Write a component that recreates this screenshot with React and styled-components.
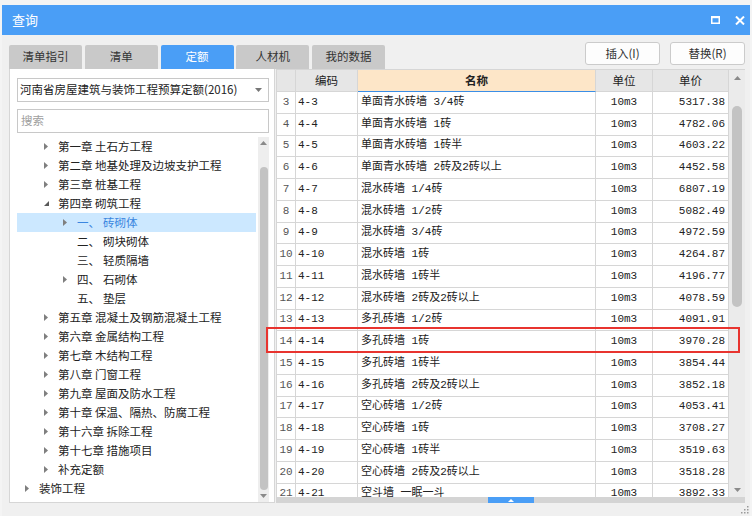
import React from 'react';
import styled, { createGlobalStyle } from 'styled-components';

const GlobalStyle = createGlobalStyle`
  html, body { margin: 0; padding: 0; background: #f4f4f4; }
  body { font-family: "Noto Sans CJK SC", "Noto Sans", sans-serif; }
  * { box-sizing: border-box; }
`;

const UI_FONT = `"Noto Sans CJK SC", "Noto Sans", sans-serif`;
const GRID_FONT = `"Liberation Mono", "Noto Sans CJK SC", monospace`;
const BLUE = '#4a9ef6';
const LINE = '#d6d6d6';

const Window = styled.div`
  margin: 5px 2px 0 2px;
  width: 748px;
  height: 511px;
  display: flex;
  flex-direction: column;
  background: #f0f0f0;
`;

const TitleBar = styled.div`
  height: 30px;
  flex-shrink: 0;
  background: ${BLUE};
  display: flex;
  align-items: center;
  padding: 0 5px 0 10px;
  color: #fff;
`;

const Title = styled.div`
  flex: 1;
  font-size: 13px;
  line-height: 30px;
`;

const TitleButtons = styled.div`
  display: flex;
  align-items: center;
  gap: 15px;
`;

const Body = styled.div`
  display: flex;
  flex-direction: column;
  padding: 7px 5px 0 7px;
`;

const Toolbar = styled.div`
  display: flex;
  height: 27px;
`;

const Tabs = styled.div`
  display: flex;
  gap: 2.75px;
  align-self: flex-end;
`;

const Tab = styled.div`
  width: 73px;
  height: 24px;
  display: flex;
  align-items: center;
  justify-content: center;
  border-radius: 2px 2px 0 0;
  background: ${p => (p.$active ? BLUE : '#c9c9c9')};
  color: ${p => (p.$active ? '#fff' : '#333')};
  font-size: 11.5px;
  line-height: 1;
`;

const Spacer = styled.div`
  flex: 1;
`;

const Actions = styled.div`
  display: flex;
  gap: 10px;
  align-self: flex-start;
`;

const ActionButton = styled.button`
  width: 75px;
  height: 23px;
  padding: 0;
  background: #fdfdfd;
  border: 1px solid #cbcbcb;
  border-radius: 3px;
  color: #333;
  font-family: ${UI_FONT};
  font-size: 11.5px;
  line-height: 1;
`;

const Content = styled.div`
  position: relative;
  display: flex;
  gap: 1px;
  height: 434px;
`;

const LeftPanel = styled.div`
  width: 266px;
  flex-shrink: 0;
  display: flex;
  flex-direction: column;
  background: #fff;
  border: 1px solid ${LINE};
  border-top: none;
  padding: 9px 5px 0 7px;
`;

const SelectBox = styled.div`
  height: 24px;
  display: flex;
  align-items: center;
  padding: 0 6px 0 2px;
  border: 1px solid #c8c8c8;
  font-size: 11.5px;
  color: #222;
  line-height: 1;
`;

const SelectText = styled.span`
  flex: 1;
  white-space: nowrap;
`;

const SearchBox = styled.div`
  height: 24px;
  margin-top: 7px;
  display: flex;
  align-items: center;
  padding: 0 3px;
  border: 1px solid #c8c8c8;
  font-size: 11.5px;
  color: #a0a0a0;
  line-height: 1;
`;

const TreeArea = styled.div`
  flex: 1;
  min-height: 0;
  margin-top: 4px;
  display: flex;
  gap: 2px;
`;

const TreeList = styled.div`
  flex: 1;
  overflow: hidden;
`;

const TreeRow = styled.div`
  height: 19px;
  display: flex;
  align-items: center;
  padding-left: ${p => 8 + p.$level * 19}px;
  background: ${p => (p.$selected ? '#cce8ff' : 'transparent')};
  color: ${p => (p.$selected ? '#3a86e0' : '#222')};
  font-size: 11.5px;
  line-height: 1;
  white-space: nowrap;
`;

const Toggle = styled.span`
  width: 14px;
  flex-shrink: 0;
  display: flex;
  align-items: center;
`;

const SectionNo = styled.span`
  display: inline-block;
  width: 26px;
`;

const VScroll = styled.div`
  width: ${p => p.$w}px;
  flex-shrink: 0;
  display: flex;
  flex-direction: column;
  align-items: center;
  background: ${p => p.$bg};
`;

const ScrollArrow = styled.div`
  height: ${p => p.$h}px;
  flex-shrink: 0;
  display: flex;
  align-items: center;
  justify-content: center;
`;

const ScrollTrack = styled.div`
  flex: 1;
  width: 100%;
  display: flex;
  flex-direction: column;
  align-items: center;
`;

const Thumb = styled.div`
  width: ${p => p.$w}px;
  height: ${p => p.$h}px;
  margin-top: ${p => p.$top}px;
  border-radius: ${p => p.$w / 2}px;
  background: #c3c3c3;
`;

const TablePanel = styled.div`
  flex: 1;
  display: flex;
  flex-direction: column;
  border-top: 1px solid ${LINE};
`;

const TableMain = styled.div`
  flex: 1;
  min-height: 0;
  display: flex;
`;

const Grid = styled.div`
  width: 453px;
  flex-shrink: 0;
  display: flex;
  flex-direction: column;
  overflow: hidden;
  background: #fff;
`;

const COLS = '20px 62px 238px 57px 76px';

const HeaderRow = styled.div`
  display: grid;
  grid-template-columns: ${COLS};
  height: 22px;
  flex-shrink: 0;
`;

const HeaderCell = styled.div`
  display: flex;
  align-items: center;
  justify-content: center;
  background: ${p => (p.$accent ? '#fde6c8' : '#e6e6e6')};
  border-right: 1px solid ${LINE};
  border-left: ${p => (p.$first ? `1px solid ${LINE}` : 'none')};
  border-bottom: 1px solid ${p => (p.$accent ? '#3b8ee6' : LINE)};
  font-family: ${UI_FONT};
  font-size: 11.5px;
  font-weight: ${p => (p.$accent ? 700 : 400)};
  color: #222;
  line-height: 1;
`;

const DataRow = styled.div`
  display: grid;
  grid-template-columns: ${COLS};
  height: 21.76px;
  flex-shrink: 0;
`;

const Cell = styled.div`
  display: flex;
  align-items: center;
  justify-content: ${p =>
    p.$align === 'right' ? 'flex-end' : p.$align === 'center' ? 'center' : 'flex-start'};
  padding: ${p =>
    p.$align === 'right' ? '0 3px 0 0' : p.$align === 'center' ? '0' : `0 0 0 ${p.$pad || 2}px`};
  border-right: 1px solid ${LINE};
  border-left: ${p => (p.$first ? `1px solid ${LINE}` : 'none')};
  border-bottom: 1px solid ${LINE};
  font-family: ${GRID_FONT};
  font-size: 11px;
  color: ${p => (p.$muted ? '#555' : '#222')};
  line-height: 1;
  white-space: nowrap;
  overflow: hidden;
`;

const HScroll = styled.div`
  height: 6px;
  flex-shrink: 0;
  display: flex;
  justify-content: center;
  background: #d4d4d4;
`;

const HHandle = styled.div`
  width: 46px;
  height: 100%;
  display: flex;
  align-items: center;
  justify-content: center;
  background: ${BLUE};
`;

const Highlight = styled.div`
  position: absolute;
  left: 257px;
  top: 258px;
  width: 474px;
  height: 26px;
  border: 2px solid #e8342f;
  pointer-events: none;
`;

const Footer = styled.div`
  height: 13px;
  flex-shrink: 0;
  display: flex;
  justify-content: flex-end;
  align-items: flex-end;
  padding: 0 1px 2px 0;
`;

const Collapsed = () => (
  <svg width="4" height="7" viewBox="0 0 4 7">
    <path d="M0 0 L4 3.5 L0 7 Z" fill="#7f7f7f" />
  </svg>
);

const Expanded = () => (
  <svg width="5" height="5" viewBox="0 0 5 5">
    <path d="M5 0 L5 5 L0 5 Z" fill="#595959" />
  </svg>
);

const Up = ({ c = '#8a8a8a' }) => (
  <svg width="7" height="4" viewBox="0 0 7 4">
    <path d="M0 4 L3.5 0 L7 4 Z" fill={c} />
  </svg>
);

const Down = ({ c = '#8a8a8a' }) => (
  <svg width="7" height="4" viewBox="0 0 7 4">
    <path d="M0 0 L7 0 L3.5 4 Z" fill={c} />
  </svg>
);

const tree = [
  { l: 1, t: '第一章 土石方工程', a: 'c' },
  { l: 1, t: '第二章 地基处理及边坡支护工程', a: 'c' },
  { l: 1, t: '第三章 桩基工程', a: 'c' },
  { l: 1, t: '第四章 砌筑工程', a: 'e' },
  { l: 2, n: '一、', t: '砖砌体', a: 'c', s: true },
  { l: 2, n: '二、', t: '砌块砌体' },
  { l: 2, n: '三、', t: '轻质隔墙' },
  { l: 2, n: '四、', t: '石砌体', a: 'c' },
  { l: 2, n: '五、', t: '垫层' },
  { l: 1, t: '第五章 混凝土及钢筋混凝土工程', a: 'c' },
  { l: 1, t: '第六章 金属结构工程', a: 'c' },
  { l: 1, t: '第七章 木结构工程', a: 'c' },
  { l: 1, t: '第八章 门窗工程', a: 'c' },
  { l: 1, t: '第九章 屋面及防水工程', a: 'c' },
  { l: 1, t: '第十章 保温、隔热、防腐工程', a: 'c' },
  { l: 1, t: '第十六章 拆除工程', a: 'c' },
  { l: 1, t: '第十七章 措施项目', a: 'c' },
  { l: 1, t: '补充定额', a: 'c' },
  { l: 0, t: '装饰工程', a: 'c' },
];

const rows = [
  [3, '4-3', '单面青水砖墙 3/4砖', '5317.38'],
  [4, '4-4', '单面青水砖墙 1砖', '4782.06'],
  [5, '4-5', '单面青水砖墙 1砖半', '4603.22'],
  [6, '4-6', '单面青水砖墙 2砖及2砖以上', '4452.58'],
  [7, '4-7', '混水砖墙 1/4砖', '6807.19'],
  [8, '4-8', '混水砖墙 1/2砖', '5082.49'],
  [9, '4-9', '混水砖墙 3/4砖', '4972.59'],
  [10, '4-10', '混水砖墙 1砖', '4264.87'],
  [11, '4-11', '混水砖墙 1砖半', '4196.77'],
  [12, '4-12', '混水砖墙 2砖及2砖以上', '4078.59'],
  [13, '4-13', '多孔砖墙 1/2砖', '4091.91'],
  [14, '4-14', '多孔砖墙 1砖', '3970.28'],
  [15, '4-15', '多孔砖墙 1砖半', '3854.44'],
  [16, '4-16', '多孔砖墙 2砖及2砖以上', '3852.18'],
  [17, '4-17', '空心砖墙 1/2砖', '4053.41'],
  [18, '4-18', '空心砖墙 1砖', '3708.27'],
  [19, '4-19', '空心砖墙 1砖半', '3519.63'],
  [20, '4-20', '空心砖墙 2砖及2砖以上', '3518.28'],
  [21, '4-21', '空斗墙 一眠一斗', '3892.33'],
];

const tabs = ['清单指引', '清单', '定额', '人材机', '我的数据'];

export default function App() {
  return (
    <>
      <GlobalStyle />
      <Window>
        <TitleBar>
          <Title>查询</Title>
          <TitleButtons>
            <svg width="9" height="8" viewBox="0 0 9 8">
              <rect x="0.75" y="1" width="7.5" height="6.25" fill="none" stroke="#fff" strokeWidth="1.5" />
              <rect x="0" y="0" width="9" height="2.2" fill="#fff" />
            </svg>
            <svg width="10" height="9" viewBox="0 0 10 9">
              <path d="M1 0.5 L9 8.5 M9 0.5 L1 8.5" stroke="#fff" strokeWidth="2" />
            </svg>
          </TitleButtons>
        </TitleBar>
        <Body>
          <Toolbar>
            <Tabs>
              {tabs.map(t => (
                <Tab key={t} $active={t === '定额'}>{t}</Tab>
              ))}
            </Tabs>
            <Spacer />
            <Actions>
              <ActionButton>插入(I)</ActionButton>
              <ActionButton>替换(R)</ActionButton>
            </Actions>
          </Toolbar>
          <Content>
            <LeftPanel>
              <SelectBox>
                <SelectText>河南省房屋建筑与装饰工程预算定额(2016)</SelectText>
                <Down c="#777" />
              </SelectBox>
              <SearchBox>搜索</SearchBox>
              <TreeArea>
                <TreeList>
                  {tree.map((n, i) => (
                    <TreeRow key={i} $level={n.l} $selected={n.s}>
                      <Toggle>{n.a === 'c' ? <Collapsed /> : n.a === 'e' ? <Expanded /> : null}</Toggle>
                      {n.n && <SectionNo>{n.n}</SectionNo>}
                      <span>{n.t}</span>
                    </TreeRow>
                  ))}
                </TreeList>
                <VScroll $w={11} $bg="#eeeeee">
                  <ScrollArrow $h={12}><Up /></ScrollArrow>
                  <ScrollTrack>
                    <Thumb $w={8} $h={323} $top={18} />
                  </ScrollTrack>
                  <ScrollArrow $h={12}><Down /></ScrollArrow>
                </VScroll>
              </TreeArea>
            </LeftPanel>
            <TablePanel>
              <TableMain>
                <Grid>
                  <HeaderRow>
                    <HeaderCell $first />
                    <HeaderCell>编码</HeaderCell>
                    <HeaderCell $accent>名称</HeaderCell>
                    <HeaderCell>单位</HeaderCell>
                    <HeaderCell>单价</HeaderCell>
                  </HeaderRow>
                  {rows.map(r => (
                    <DataRow key={r[0]}>
                      <Cell $first $align="center" $muted>{r[0]}</Cell>
                      <Cell $pad={2}>{r[1]}</Cell>
                      <Cell $pad={3}>{r[2]}</Cell>
                      <Cell $align="center">10m3</Cell>
                      <Cell $align="right">{r[3]}</Cell>
                    </DataRow>
                  ))}
                </Grid>
                <VScroll $w={16} $bg="#ebebeb">
                  <ScrollArrow $h={16}><Up /></ScrollArrow>
                  <ScrollTrack>
                    <Thumb $w={10} $h={201} $top={20} />
                  </ScrollTrack>
                  <ScrollArrow $h={14}><Down /></ScrollArrow>
                </VScroll>
              </TableMain>
              <HScroll>
                <HHandle>
                  <svg width="6" height="3" viewBox="0 0 6 3">
                    <path d="M0 3 L3 0 L6 3 Z" fill="#fff" />
                  </svg>
                </HHandle>
              </HScroll>
            </TablePanel>
            <Highlight />
          </Content>
        </Body>
        <Footer>
          <svg width="9" height="9" viewBox="0 0 9 9">
            {[[7, 1], [7, 4], [7, 7], [4, 4], [4, 7], [1, 7]].map(([x, y], i) => (
              <rect key={i} x={x} y={y} width="1.5" height="1.5" fill="#9a9a9a" />
            ))}
          </svg>
        </Footer>
      </Window>
    </>
  );
}
